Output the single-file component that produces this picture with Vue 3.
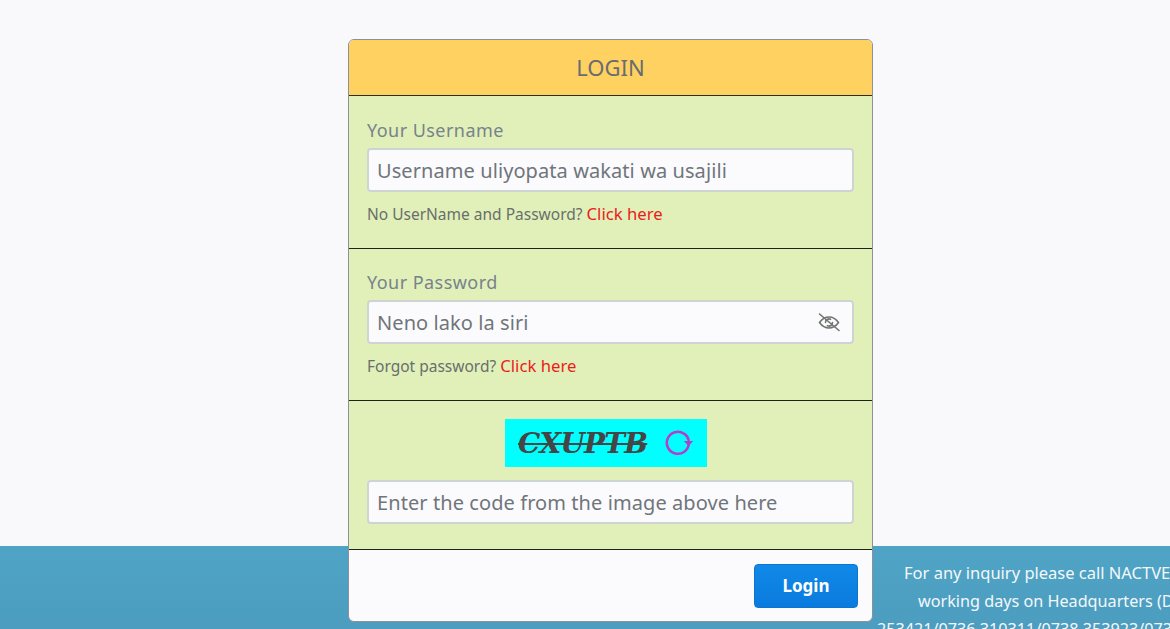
<script setup>
const footerLines = [
  'For any inquiry please call NACTVET',
  'working days on Headquarters (D',
  '253421/0736 310311/0738 353923/073'
]
</script>

<template>
  <div class="page">
    <form class="card" @submit.prevent>
      <header class="card-head">LOGIN</header>
      <section class="block">
        <label class="label" for="username">Your Username</label>
        <input id="username" class="field" type="text" placeholder="Username uliyopata wakati wa usajili" />
        <p class="hint">No UserName and Password? <a class="link" href="#">Click here</a></p>
      </section>
      <section class="block block-second">
        <label class="label" for="password">Your Password</label>
        <div class="field-wrap">
          <input id="password" class="field" type="text" placeholder="Neno lako la siri" />
          <svg class="eye" viewBox="0 0 24 24" width="24" height="24" fill="none" stroke="#70756f" stroke-width="1.600" stroke-linecap="round">
            <path d="M2.500 12.500C5 9 8.200 7 12 7s7 2 9.500 5.500C19 16 15.800 18 12 18s-7-2-9.500-5.500z" />
            <path d="M8.500 12.500a3.500 3.500 0 0 1 5-3.200M15.500 12.500a3.500 3.500 0 0 1-5 3.200" />
            <path d="M2.500 4 22 20.500" />
          </svg>
        </div>
        <p class="hint">Forgot password? <a class="link" href="#">Click here</a></p>
      </section>
      <section class="block block-captcha">
        <div class="captcha">
          <span class="captcha-code">CXUPTB</span>
          <svg class="refresh" viewBox="0 0 30 30" width="30" height="30" fill="none">
            <path d="M24.800 15.500A11 11 0 1 1 20 5.700c2.400 1.400 4 3.700 4.600 6.300" stroke="#b63ccb" stroke-width="2.500" stroke-linecap="round" />
            <path d="M19.800 13h9.400l-4.600 5z" fill="#b63ccb" />
          </svg>
        </div>
        <input class="field" type="text" placeholder="Enter the code from the image above here" />
      </section>
      <footer class="card-foot">
        <button class="submit" type="submit">Login</button>
      </footer>
    </form>
    <footer class="site-foot">
      <div class="foot-text">
        <p v-for="line in footerLines" :key="line" class="foot-line">{{ line }}</p>
      </div>
    </footer>
  </div>
</template>

<style>
html, body { margin: 0; background: #f9f9fc; }
</style>

<style scoped>
* { box-sizing: border-box; }
.page {
  height: 629px;
  overflow: hidden;
  display: flex;
  flex-direction: column;
  background: #f9f9fc;
  font-family: "Noto Sans", "Open Sans", sans-serif;
}
.card {
  position: relative;
  z-index: 1;
  flex: none;
  width: 525px;
  height: 583px;
  margin: 39px 0 0 348px;
  display: flex;
  flex-direction: column;
  border: 1px solid #8b919b;
  border-radius: 6px;
  overflow: hidden;
  background: #fbfbfe;
}
.card-head {
  flex: none;
  height: 56px;
  padding-bottom: 2px;
  display: flex;
  align-items: center;
  justify-content: center;
  background: #ffd160;
  border-bottom: 1px solid #2c2c22;
  color: #686c72;
  font-size: 22px;
}
.block {
  flex: none;
  height: 153px;
  padding: 21px 18px 0;
  background: #e1f0b9;
  border-bottom: 1px solid #1f2318;
}
.block-second { height: 152px; padding-top: 20px; }
.label {
  display: block;
  height: 27px;
  margin-bottom: 4px;
  color: #77838c;
  font-size: 18px;
  line-height: 27px;
  letter-spacing: 0.45px;
}
.field {
  display: block;
  width: 100%;
  height: 44px;
  padding: 0 8px;
  border: 2px solid #cdd4d2;
  border-radius: 4px;
  background: #fbfbfe;
  font: inherit;
  font-size: 20px;
  letter-spacing: 0.08px;
  outline: none;
}
.field::placeholder { color: #70757a; opacity: 1; }
.field-wrap { position: relative; }
.eye { position: absolute; right: 13px; top: 10px; }
.hint {
  margin: 10px 0 0;
  color: #696e6c;
  font-size: 15.500px;
  line-height: 24px;
}
.link { color: #ea1c1c; text-decoration: none; font-size: 16.700px; }
.block-captcha {
  height: 149px;
  padding-top: 18px;
}
.captcha {
  width: 202px;
  height: 48px;
  margin: 0 0 13px 138px;
  padding-left: 13px;
  display: flex;
  align-items: center;
  gap: 17px;
  background: #00ffff;
}
.captcha-code {
  color: #454545;
  font-family: "DejaVu Serif", serif;
  font-size: 28px;
  font-weight: 700;
  font-style: italic;
  letter-spacing: -0.800px;
  text-decoration: line-through;
}
.refresh { flex: none; }
.card-foot {
  flex: 1;
  display: flex;
  justify-content: flex-end;
  align-items: flex-start;
  padding: 14px 14px 0 0;
}
.submit {
  width: 104px;
  height: 44px;
  padding-bottom: 3px;
  border: 1px solid #0f74cb;
  border-radius: 4px;
  background: linear-gradient(#1089e8, #0a7bde);
  color: #fff;
  font: inherit;
  font-size: 17px;
  font-weight: 700;
}
.site-foot {
  flex: none;
  height: 83px;
  margin-top: -76px;
  padding: 13px 0 0 877px;
  background: linear-gradient(#4fa4c5, #4c9dc0);
  overflow: hidden;
}
.foot-text { width: 600px; text-align: left; }
.foot-line {
  margin: 0;
  color: #f4f8fa;
  font-size: 16.500px;
  line-height: 28px;
  white-space: nowrap;
}
.foot-line:nth-child(1) { padding-left: 27px; }
.foot-line:nth-child(2) { padding-left: 41px; font-size: 16.200px; }
.foot-line:nth-child(3) { font-size: 16.200px; }
</style>
